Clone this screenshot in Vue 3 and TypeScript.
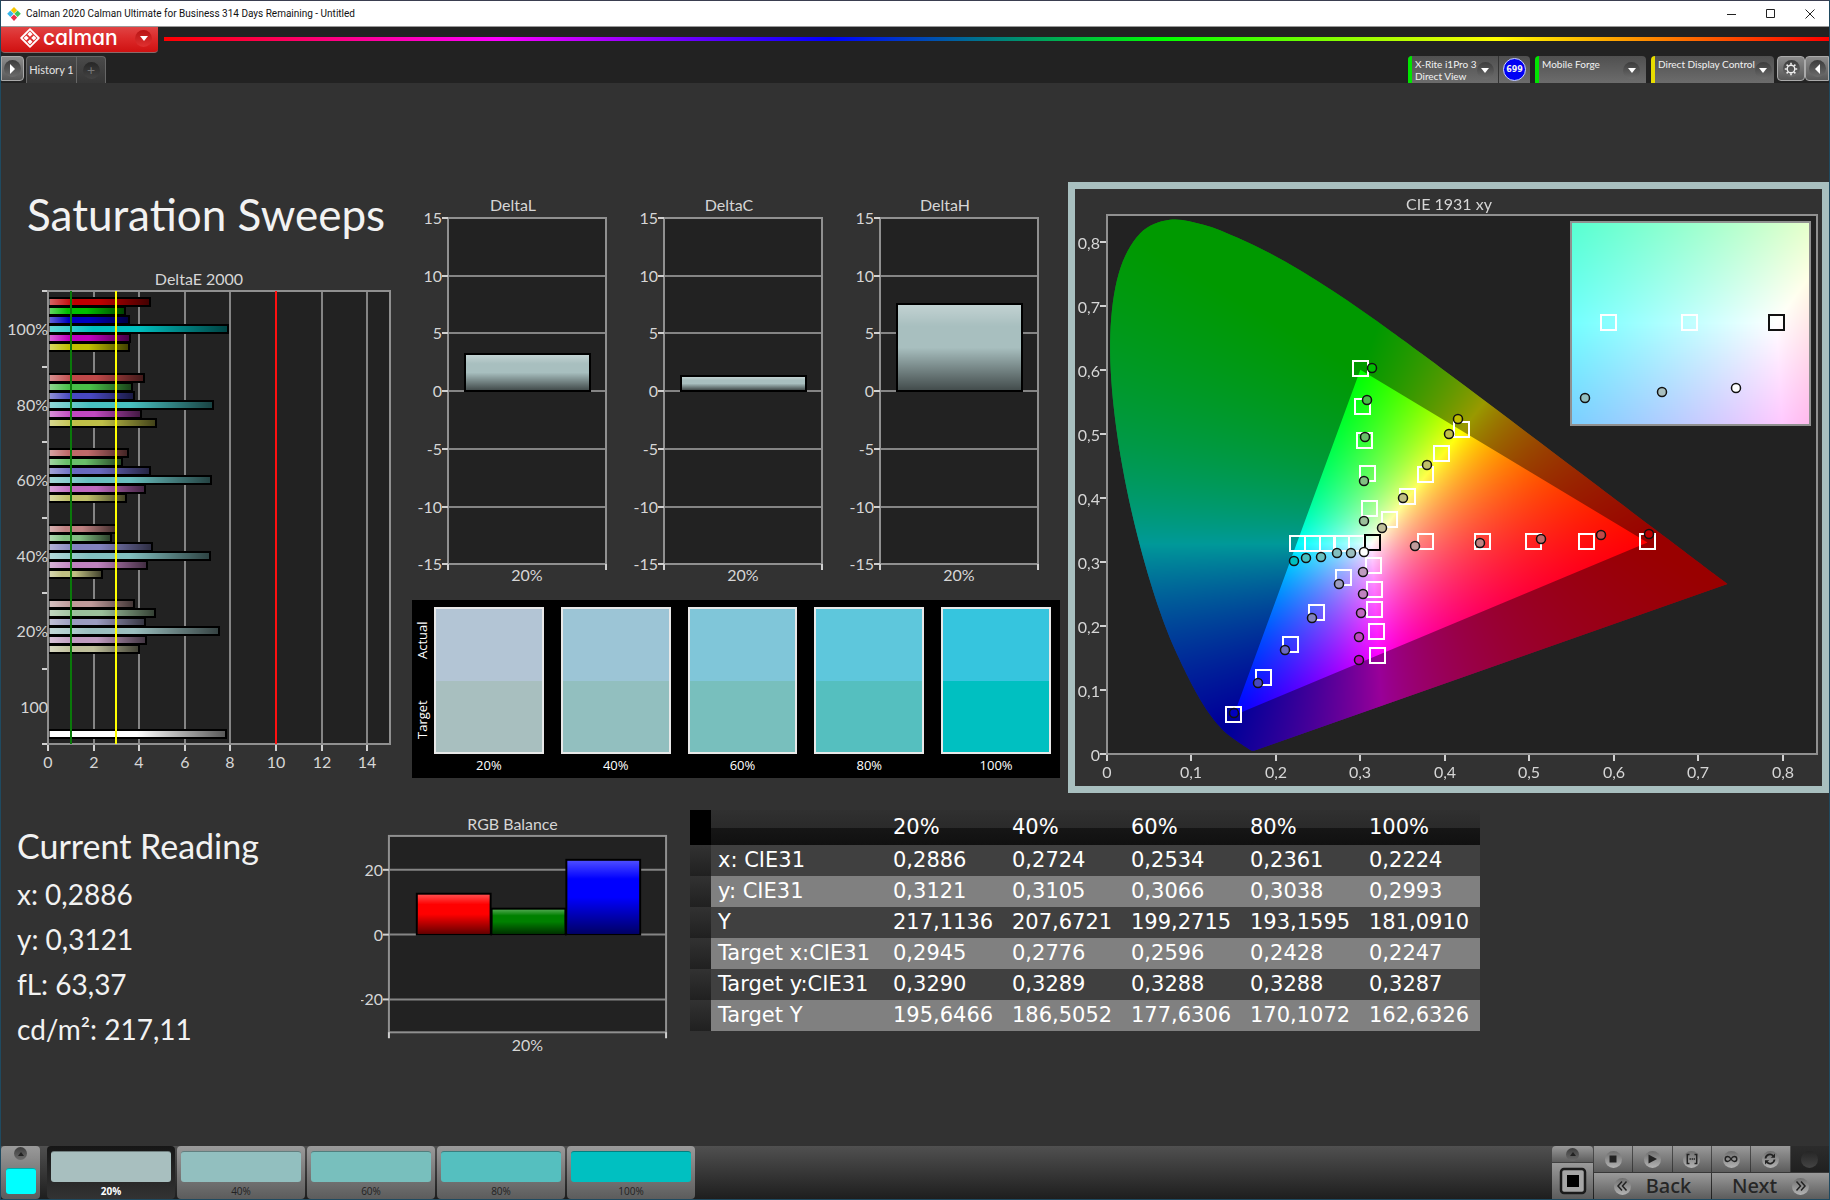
<script setup lang="ts">
import { onMounted, ref } from 'vue'

type Point = [number, number]

interface SweepGroup {
  label: string
  low: number
  values: number[]
}

interface VerticalChart {
  title: string
  value: number
}

/* ---------- Saturation sweep data ---------- */
const HIGH = 191
const hueMasks = ['r', 'g', 'b', 'gb', 'rb', 'rg']

function shade(mask: string, low: number): string {
  const c = (k: string) => (mask.includes(k) ? HIGH : low)
  return `rgb(${c('r')}, ${c('g')}, ${c('b')})`
}

const sweeps: SweepGroup[] = [
  { label: '100%', low: 0, values: [4.48, 3.36, 3.54, 7.88, 3.6, 3.54] },
  { label: '80%', low: 72, values: [4.22, 3.69, 3.78, 7.22, 4.06, 4.74] },
  { label: '60%', low: 105, values: [3.49, 3.25, 4.49, 7.16, 4.27, 3.43] },
  { label: '40%', low: 130, values: [2.99, 2.77, 4.55, 7.09, 4.33, 2.37] },
  { label: '20%', low: 155, values: [3.78, 4.68, 4.24, 7.49, 4.28, 4.0] },
]

const E = { left: 47, top: 29, right: 389, bottom: 482 }
const ex = (v: number) => Math.round(E.left + (v * (E.right - E.left)) / 15)
const ey = (band: number) => Math.round(E.top + (band * (E.bottom - E.top)) / 6)

/* ---------- Delta charts ---------- */
const deltaCharts: VerticalChart[] = [
  { title: 'DeltaL', value: 3.24 },
  { title: 'DeltaC', value: 1.32 },
  { title: 'DeltaH', value: 7.57 },
]
const deltaTicks = [15, 10, 5, 0, -5, -10, -15]
const dy = (v: number) => Math.round(200 - v * 11.55)

/* ---------- Swatches ---------- */
const swatches = [
  { label: '20%', actual: '#b3c5d5', target: '#a8bfbf' },
  { label: '40%', actual: '#9cc5d6', target: '#92bfbf' },
  { label: '60%', actual: '#80c6d9', target: '#78bfbd' },
  { label: '80%', actual: '#5ec7dc', target: '#55bfbf' },
  { label: '100%', actual: '#36c5de', target: '#00c0c1' },
]

/* ---------- RGB balance ---------- */
const by = (v: number) => Math.round(125 - v * 3.27)
const balance = [
  { color: '#ff0000', value: 12.4 },
  { color: '#008000', value: 7.8 },
  { color: '#0000ff', value: 23 },
]

/* ---------- Readings and table ---------- */
const readings = ['x: 0,2886', 'y: 0,3121', 'fL: 63,37', 'cd/m²: 217,11']
const rows = [
  { name: 'x: CIE31', cells: ['0,2886', '0,2724', '0,2534', '0,2361', '0,2224'] },
  { name: 'y: CIE31', cells: ['0,3121', '0,3105', '0,3066', '0,3038', '0,2993'] },
  { name: 'Y', cells: ['217,1136', '207,6721', '199,2715', '193,1595', '181,0910'] },
  { name: 'Target x:CIE31', cells: ['0,2945', '0,2776', '0,2596', '0,2428', '0,2247'] },
  { name: 'Target y:CIE31', cells: ['0,3290', '0,3289', '0,3288', '0,3288', '0,3287'] },
  { name: 'Target Y', cells: ['195,6466', '186,5052', '177,6306', '170,1072', '162,6326'] },
]

/* ---------- CIE 1931 chart ---------- */
const C = { w: 747, h: 597, left: 32, top: 26, right: 742, bottom: 565, sx: 844.5, sy: 640.6 }
const cx = (x: number) => Math.round(C.left + x * C.sx)
const cy = (y: number) => Math.round(C.bottom - y * C.sy)
const cieTicks = [0, 0.1, 0.2, 0.3, 0.4, 0.5, 0.6, 0.7, 0.8]
const comma = (v: number) => String(v).replace('.', ',')

const I = { left: 497, top: 34, right: 734, bottom: 235, x0: 0.27, x1: 0.3196, y0: 0.3041, y1: 0.3532 }
const ix = (x: number) => Math.round(I.left + ((x - I.x0) / (I.x1 - I.x0)) * (I.right - I.left))
const iy = (y: number) => Math.round(I.bottom - ((y - I.y0) / (I.y1 - I.y0)) * (I.bottom - I.top))

const targets: Point[] = [
  [0.3, 0.602], [0.3023, 0.5438], [0.3043, 0.4901], [0.3075, 0.4389], [0.3098, 0.3846],
  [0.4192, 0.5068], [0.3959, 0.4691], [0.3766, 0.437], [0.3552, 0.4031], [0.3343, 0.3673],
  [0.6394, 0.3318], [0.5676, 0.3318], [0.504, 0.3318], [0.4437, 0.3318], [0.3766, 0.3318],
  [0.225, 0.33], [0.2431, 0.33], [0.2601, 0.33], [0.2775, 0.33], [0.2945, 0.33],
  [0.1492, 0.0623], [0.1847, 0.1198], [0.2163, 0.1716], [0.2475, 0.2222], [0.2795, 0.2759],
  [0.3201, 0.1543], [0.3185, 0.192], [0.3166, 0.2265], [0.3166, 0.2574], [0.3146, 0.2951],
]

const measured: { mask: string; points: Point[] }[] = [
  { mask: 'g', points: [[0.3134, 0.602], [0.3079, 0.5525], [0.3059, 0.495], [0.3039, 0.4265], [0.3039, 0.3636]] },
  { mask: 'rg', points: [[0.4156, 0.5235], [0.405, 0.4988], [0.3785, 0.4512], [0.3505, 0.3994], [0.3252, 0.3531]] },
  { mask: 'r', points: [[0.6422, 0.3438], [0.585, 0.3414], [0.5139, 0.3358], [0.4421, 0.3296], [0.3643, 0.3247]] },
  { mask: 'gb', points: [[0.2218, 0.3006], [0.2356, 0.3062], [0.253, 0.308], [0.2724, 0.3136], [0.2885, 0.3136]] },
  { mask: 'b', points: [[0.1508, 0.0642], [0.1792, 0.1105], [0.2104, 0.1617], [0.2427, 0.2123], [0.2747, 0.266]] },
  { mask: 'rb', points: [[0.2988, 0.1475], [0.2988, 0.1833], [0.3008, 0.2198], [0.3031, 0.25], [0.3031, 0.2846]] },
]

const locus: Point[] = [
  [0.1741, 0.005], [0.1714, 0.0051], [0.1689, 0.0069], [0.1644, 0.0109], [0.1566, 0.0177], [0.144, 0.0297],
  [0.1355, 0.0399], [0.1241, 0.0578], [0.1096, 0.0868], [0.0913, 0.1327], [0.0687, 0.2007], [0.0454, 0.295],
  [0.0235, 0.4127], [0.0082, 0.5384], [0.0039, 0.6548], [0.0139, 0.7502], [0.0389, 0.812], [0.0743, 0.8338],
  [0.1142, 0.8262], [0.1547, 0.8059], [0.1929, 0.7816], [0.2296, 0.7543], [0.2658, 0.7243], [0.3016, 0.6923],
  [0.3373, 0.6589], [0.3731, 0.6245], [0.4441, 0.5547], [0.5125, 0.4866], [0.5752, 0.4242], [0.627, 0.3725],
  [0.6658, 0.334], [0.6915, 0.3083], [0.719, 0.2809], [0.7347, 0.2653],
]

const canvas = ref<HTMLCanvasElement | null>(null)

function chroma(x: number, y: number): [number, number, number] {
  const yy = Math.max(y, 0.0001)
  const X = x / yy
  const Z = (1 - x - yy) / yy
  const r = Math.max(0, 3.2406 * X - 1.5372 - 0.4986 * Z)
  const g = Math.max(0, -0.9689 * X + 1.8758 + 0.0415 * Z)
  const b = Math.max(0, 0.0557 * X - 0.204 + 1.057 * Z)
  const m = Math.max(r, g, b) || 1
  return [(r / m) * 255, (g / m) * 255, (b / m) * 255]
}

function field(w: number, h: number, toXY: (px: number, py: number) => Point): HTMLCanvasElement {
  const layer = document.createElement('canvas')
  layer.width = w
  layer.height = h
  const ctx = layer.getContext('2d')!
  const img = ctx.createImageData(w, h)
  for (let py = 0; py < h; py++) {
    for (let px = 0; px < w; px++) {
      const [x, y] = toXY(px, py)
      const [r, g, b] = chroma(x, y)
      const k = (py * w + px) * 4
      img.data[k] = r
      img.data[k + 1] = g
      img.data[k + 2] = b
      img.data[k + 3] = 255
    }
  }
  ctx.putImageData(img, 0, 0)
  return layer
}

function traceLocus(ctx: CanvasRenderingContext2D) {
  const p = locus.map(([x, y]): Point => [C.left + x * C.sx, C.bottom - y * C.sy])
  ctx.moveTo(p[0][0], p[0][1])
  for (let i = 0; i < p.length - 1; i++) {
    const a = p[Math.max(0, i - 1)]
    const b = p[i]
    const c = p[i + 1]
    const d = p[Math.min(p.length - 1, i + 2)]
    ctx.bezierCurveTo(
      b[0] + (c[0] - a[0]) / 6, b[1] + (c[1] - a[1]) / 6,
      c[0] - (d[0] - b[0]) / 6, c[1] - (d[1] - b[1]) / 6,
      c[0], c[1],
    )
  }
  ctx.closePath()
}

onMounted(() => {
  const ctx = canvas.value!.getContext('2d')!
  ctx.fillStyle = '#222222'
  ctx.fillRect(C.left, C.top, C.right - C.left, C.bottom - C.top)

  const gamut = field(C.w, C.h, (px, py) => [(px - C.left) / C.sx, (C.bottom - py) / C.sy])
  ctx.save()
  ctx.beginPath()
  traceLocus(ctx)
  ctx.clip()
  ctx.drawImage(gamut, 0, 0)
  ctx.fillStyle = 'rgba(0, 0, 0, 0.4)'
  ctx.beginPath()
  ctx.rect(0, 0, C.w, C.h)
  const tri: Point[] = [[0.64, 0.33], [0.3, 0.6], [0.15, 0.06]]
  tri.forEach(([x, y], i) => {
    const px = C.left + x * C.sx
    const py = C.bottom - y * C.sy
    if (i === 0) ctx.moveTo(px, py)
    else ctx.lineTo(px, py)
  })
  ctx.closePath()
  ctx.fill('evenodd')
  ctx.restore()

  const w = I.right - I.left
  const h = I.bottom - I.top
  const inset = field(w, h, (px, py) => [I.x0 + (px / w) * (I.x1 - I.x0), I.y1 - (py / h) * (I.y1 - I.y0)])
  ctx.drawImage(inset, I.left, I.top)
})
</script>

<template>
  <div class="app">
    <header class="titlebar">
      <svg class="appicon" viewBox="0 0 14 14" width="14" height="14" aria-hidden="true">
        <path d="M7 0l3.200 3.200L7 6.400 3.800 3.200z" fill="#f7c600" />
        <path d="M3.400 3.600l3.200 3.200L3.400 10 .2 6.800z" fill="#35b6ea" />
        <path d="M10.600 3.600l3.200 3.200-3.200 3.200-3.200-3.200z" fill="#3cc45a" />
        <path d="M7 7.400l3.200 3.200L7 14l-3.200-3.400z" fill="#e8304c" />
      </svg>
      <span class="caption">Calman 2020 Calman Ultimate for Business 314 Days Remaining - Untitled</span>
      <div class="winbtns">
        <button type="button" aria-label="Minimize"><svg viewBox="0 0 10 10" width="10" height="10"><path d="M0 5.500h9" /></svg></button>
        <button type="button" aria-label="Maximize"><svg viewBox="0 0 10 10" width="10" height="10"><path d="M.5.5h8v8h-8z" /></svg></button>
        <button type="button" aria-label="Close"><svg viewBox="0 0 10 10" width="10" height="10"><path d="M.5.5l9 9M9.500.5l-9 9" /></svg></button>
      </div>
    </header>

    <div class="brandrow">
      <button type="button" class="brand">
        <svg viewBox="0 0 20 20" width="20" height="20" aria-hidden="true">
          <path d="M10 1.200L18.800 10 10 18.800 1.200 10z" fill="none" stroke="#fff" stroke-width="1.800" stroke-linejoin="round" />
          <g fill="#fff">
            <path d="M10 3.600l2.600 2.600L10 8.800 7.400 6.200z" />
            <path d="M6.200 7.400L8.800 10l-2.600 2.600L3.600 10z" />
            <path d="M13.800 7.400l2.600 2.600-2.600 2.600-2.600-2.600z" />
            <path d="M10 11.200l2.600 2.600-2.600 2.600-2.600-2.600z" />
          </g>
        </svg>
        <span class="brandname">calman</span>
        <span class="disc red"><i class="tri down"></i></span>
      </button>
      <div class="rainbow"></div>
    </div>

    <div class="tabrow">
      <button type="button" class="metal edge" aria-label="Expand"><span class="disc"><i class="tri right"></i></span></button>
      <div class="tabs">
        <button type="button" class="tab">History 1</button>
        <button type="button" class="tab add" aria-label="Add"><span class="disc dim">+</span></button>
      </div>
      <div class="devices">
        <div class="device meter">
          <button type="button" class="devmain green"><span>X-Rite i1Pro 3<br />Direct View</span><span class="disc"><i class="tri down"></i></span></button>
          <button type="button" class="devbadge"><b>699</b></button>
        </div>
        <button type="button" class="device devmain green source"><span>Mobile Forge</span><span class="disc"><i class="tri down"></i></span></button>
        <button type="button" class="device devmain yellow display"><span>Direct Display Control</span><span class="disc"><i class="tri down"></i></span></button>
      </div>
      <button type="button" class="metal gear" aria-label="Settings">
        <span class="disc">
          <svg viewBox="0 0 14 14" width="14" height="14">
            <circle cx="7" cy="7" r="3.800" fill="none" stroke="#eee" stroke-width="1.400" />
            <path d="M7 .8v2M7 11.200v2M.8 7h2M11.200 7h2M2.600 2.600L4 4M10 10l1.400 1.400M2.600 11.400L4 10M10 4l1.400-1.400" stroke="#eee" stroke-width="1.600" />
          </svg>
        </span>
      </button>
      <button type="button" class="metal last" aria-label="Collapse"><span class="disc"><i class="tri left"></i></span></button>
    </div>

    <main>
      <section class="upper">
        <div class="colA">
          <h1>Saturation Sweeps</h1>
          <svg class="chart" viewBox="0 0 404 520" role="img" aria-label="DeltaE 2000">
            <defs>
              <linearGradient id="glossH">
                <stop offset="0" stop-color="#fff" stop-opacity=".4" />
                <stop offset=".25" stop-color="#fff" stop-opacity="0" />
                <stop offset=".5" stop-color="#000" stop-opacity="0" />
                <stop offset="1" stop-color="#000" stop-opacity=".65" />
              </linearGradient>
              <linearGradient id="glossV" x2="0" y2="1">
                <stop offset="0" stop-color="#fff" stop-opacity=".3" />
                <stop offset=".25" stop-color="#fff" stop-opacity="0" />
                <stop offset=".5" stop-color="#000" stop-opacity="0" />
                <stop offset="1" stop-color="#000" stop-opacity=".6" />
              </linearGradient>
            </defs>
            <text x="198" y="23" text-anchor="middle">DeltaE 2000</text>
            <rect :x="E.left" :y="E.top" :width="E.right - E.left" :height="E.bottom - E.top" fill="#222" />
            <g class="grid">
              <path v-for="t in [2, 4, 6, 8, 12, 14]" :key="t" :d="`M${ex(t)} ${E.top}V${E.bottom}`" />
            </g>
            <g v-for="(s, gi) in sweeps" :key="s.label">
              <template v-for="(v, i) in s.values" :key="i">
                <rect class="bar" :x="E.left + 1" :y="ey(gi) + 7 + i * 9" :width="ex(v) - E.left - 1" height="8" :fill="shade(hueMasks[i], s.low)" />
                <rect :x="E.left + 1" :y="ey(gi) + 8 + i * 9" :width="ex(v) - E.left - 2" height="6" fill="url(#glossH)" />
              </template>
            </g>
            <rect class="bar" :x="E.left + 1" y="468" :width="ex(7.8) - E.left - 1" height="8" fill="#fff" />
            <rect :x="E.left + 1" y="469" :width="ex(7.8) - E.left - 2" height="6" fill="url(#glossH)" />
            <rect class="frame" :x="E.left" :y="E.top" :width="E.right - E.left" :height="E.bottom - E.top" />
            <path :d="`M${ex(1)} ${E.top}V${E.bottom}`" stroke="#0a7a0a" stroke-width="2" />
            <path :d="`M${ex(3)} ${E.top}V${E.bottom}`" stroke="#ffff00" stroke-width="2" />
            <path :d="`M${ex(10)} ${E.top}V${E.bottom}`" stroke="#ff1010" stroke-width="2" />
            <g class="tick">
              <path v-for="n in 7" :key="n" :d="`M${E.left - 6} ${ey(n - 1)}h5`" />
              <path v-for="t in [0, 2, 4, 6, 8, 10, 12, 14]" :key="'x' + t" :d="`M${ex(t)} ${E.bottom + 1}v6`" />
            </g>
            <text v-for="(l, n) in ['100%', '80%', '60%', '40%', '20%', '100']" :key="n" :x="E.left" :y="ey(n) + 44" text-anchor="end">{{ l }}</text>
            <text v-for="t in [0, 2, 4, 6, 8, 10, 12, 14]" :key="'l' + t" :x="ex(t)" y="506" text-anchor="middle">{{ t }}</text>
          </svg>
        </div>

        <div class="colB">
          <div class="deltas">
            <svg v-for="d in deltaCharts" :key="d.title" class="chart" viewBox="0 0 216 409" role="img" :aria-label="d.title">
              <text x="108" y="20" text-anchor="middle">{{ d.title }}</text>
              <rect x="43" :y="dy(15)" width="158" :height="dy(-15) - dy(15)" fill="#222" />
              <g class="grid"><path v-for="t in deltaTicks" :key="t" :d="`M43 ${dy(t)}h158`" /></g>
              <rect class="frame" x="43" :y="dy(15)" width="158" :height="dy(-15) - dy(15)" />
              <rect class="bar" x="60" :y="dy(d.value)" width="125" :height="dy(0) - dy(d.value)" fill="#a8bfbf" />
              <rect x="61" :y="dy(d.value) + 1" width="123" :height="dy(0) - dy(d.value) - 2" fill="url(#glossV)" />
              <g class="tick">
                <path v-for="t in deltaTicks" :key="t" :d="`M37 ${dy(t)}h6`" />
                <path :d="`M43 ${dy(-15)}v6M201 ${dy(-15)}v6`" />
              </g>
              <text v-for="t in deltaTicks" :key="'l' + t" x="37" :y="dy(t) + 6" text-anchor="end">{{ t }}</text>
              <text x="122" y="390" text-anchor="middle">20%</text>
            </svg>
          </div>
          <div class="compare">
            <div class="side"><span>Actual</span><span>Target</span></div>
            <figure v-for="s in swatches" :key="s.label">
              <div class="pair"><i :style="{ background: s.actual }"></i><i :style="{ background: s.target }"></i></div>
              <figcaption>{{ s.label }}</figcaption>
            </figure>
          </div>
        </div>

        <div class="cie">
          <canvas ref="canvas" :width="C.w" :height="C.h"></canvas>
          <svg class="chart" :viewBox="`0 0 ${C.w} ${C.h}`" role="img" aria-label="CIE 1931 xy">
            <text x="374" y="21" text-anchor="middle">CIE 1931 xy</text>
            <rect class="frame" :x="C.left" :y="C.top" :width="C.right - C.left" :height="C.bottom - C.top" />
            <g class="tick">
              <path v-for="t in cieTicks" :key="'y' + t" :d="`M${C.left - 7} ${cy(t)}h6`" />
              <path v-for="t in cieTicks" :key="'x' + t" :d="`M${cx(t)} ${C.bottom + 1}v6`" />
            </g>
            <text v-for="t in cieTicks" :key="'ly' + t" x="25" :y="cy(t) + 7" text-anchor="end">{{ comma(t) }}</text>
            <text v-for="t in cieTicks" :key="'lx' + t" :x="cx(t)" y="589" text-anchor="middle">{{ comma(t) }}</text>
            <g fill="none" stroke="#fff" stroke-width="2">
              <rect v-for="(t, i) in targets" :key="i" :x="cx(t[0]) - 7" :y="cy(t[1]) - 7" width="15" height="15" />
            </g>
            <rect :x="cx(0.3134) - 7" :y="cy(0.3302) - 7" width="15" height="15" fill="none" stroke="#000" stroke-width="2" />
            <g stroke="#111" stroke-width="1.500">
              <template v-for="m in measured" :key="m.mask">
                <circle v-for="(p, i) in m.points" :key="i" :cx="cx(p[0])" :cy="cy(p[1])" r="4.500" :fill="shade(m.mask, sweeps[i].low)" />
              </template>
              <circle :cx="cx(0.3039)" :cy="cy(0.316)" r="4.500" fill="#fff" />
            </g>
            <rect class="frame" :x="I.left - 1" :y="I.top - 1" :width="I.right - I.left + 2" :height="I.bottom - I.top + 2" />
            <g fill="none" stroke="#fff" stroke-width="2">
              <rect v-for="x in [0.2776, 0.2945]" :key="x" :x="ix(x) - 7" :y="iy(0.329) - 7" width="15" height="15" />
            </g>
            <rect :x="ix(0.3127) - 7" :y="iy(0.329) - 7" width="15" height="15" fill="none" stroke="#111" stroke-width="2" />
            <g stroke="#111" stroke-width="1.500">
              <circle :cx="ix(0.2728)" :cy="iy(0.3104)" r="4.500" fill="#92bfbf" />
              <circle :cx="ix(0.2889)" :cy="iy(0.3118)" r="4.500" fill="#a8bfbf" />
              <circle :cx="ix(0.3044)" :cy="iy(0.313)" r="4.500" fill="#fff" />
            </g>
          </svg>
        </div>
      </section>

      <section class="lower">
        <div class="reading">
          <h2>Current Reading</h2>
          <p v-for="r in readings" :key="r">{{ r }}</p>
        </div>
        <svg class="chart" viewBox="0 0 330 250" role="img" aria-label="RGB Balance">
          <text x="152" y="20" text-anchor="middle">RGB Balance</text>
          <rect x="28" y="26" width="278" height="197" fill="#222" />
          <g class="grid"><path v-for="t in [20, 0, -20]" :key="t" :d="`M28 ${by(t)}h278`" /></g>
          <rect class="frame" x="28" y="26" width="278" height="197" />
          <template v-for="(b, i) in balance" :key="i">
            <rect class="bar" :x="56 + i * 75" :y="by(b.value)" width="74" :height="by(0) - by(b.value)" :fill="b.color" />
            <rect :x="57 + i * 75" :y="by(b.value) + 1" width="72" :height="by(0) - by(b.value) - 2" fill="url(#glossV)" />
          </template>
          <g class="tick">
            <path v-for="t in [20, 0, -20]" :key="t" :d="`M22 ${by(t)}h6`" />
            <path d="M28 223v6M306 223v6" />
          </g>
          <text v-for="t in [20, 0, -20]" :key="'l' + t" x="22" :y="by(t) + 6" text-anchor="end">{{ t }}</text>
          <text x="167" y="242" text-anchor="middle">20%</text>
        </svg>
        <table>
          <thead>
            <tr>
              <td class="stub"></td>
              <th></th>
              <th v-for="s in swatches" :key="s.label" scope="col">{{ s.label }}</th>
            </tr>
          </thead>
          <tbody>
            <tr v-for="r in rows" :key="r.name">
              <td class="stub"></td>
              <th scope="row">{{ r.name }}</th>
              <td v-for="(c, i) in r.cells" :key="i">{{ c }}</td>
            </tr>
          </tbody>
        </table>
      </section>
    </main>

    <footer>
      <button type="button" class="patch" aria-label="Current colour"><span class="disc small"><i class="tri up"></i></span><i class="cyan"></i></button>
      <div class="strip">
        <button v-for="(s, i) in swatches" :key="s.label" type="button" :class="{ active: i === 0 }">
          <i :style="{ background: s.target }"></i>{{ s.label }}
        </button>
      </div>
      <div class="controls">
        <div class="window">
          <button type="button" aria-label="More"><span class="disc small"><i class="tri up"></i></span></button>
          <button type="button" aria-label="Pattern window">
            <svg viewBox="0 0 28 28" width="28" height="28"><rect x="2" y="2" width="24" height="24" rx="3" fill="#a5a5a5" stroke="#1a1a1a" stroke-width="2.500" /><rect x="8" y="8" width="12" height="12" fill="#000" /></svg>
          </button>
        </div>
        <div class="transport">
          <div class="icons">
            <button type="button" aria-label="Stop"><span class="disc light"><svg viewBox="0 0 14 14" width="14" height="14"><path d="M3.500 3.500h7v7h-7z" fill="#222" /></svg></span></button>
            <button type="button" aria-label="Play"><span class="disc light"><svg viewBox="0 0 14 14" width="14" height="14"><path d="M3.500 2.500l8.500 4.500-8.500 4.500z" fill="#222" /></svg></span></button>
            <button type="button" aria-label="Range"><span class="disc light"><svg viewBox="0 0 14 14" width="14" height="14"><path d="M4.500 2.500H2.300v9h2.200M9.500 2.500h2.200v9H9.500" fill="none" stroke="#222" stroke-width="1.500" /><path d="M4.500 6.300h1.400v1.400H4.500zM6.600 6.300H8v1.400H6.600zM8.600 6.300H10v1.400H8.600z" fill="#222" /></svg></span></button>
            <button type="button" aria-label="Loop"><span class="disc light"><svg viewBox="0 0 14 14" width="14" height="14"><path d="M7 7C5.800 5 4.800 4.500 3.700 4.500a2.500 2.500 0 0 0 0 5C4.800 9.500 5.800 9 7 7s2.200-2.500 3.300-2.500a2.500 2.500 0 0 1 0 5C9.200 9.500 8.200 9 7 7z" fill="none" stroke="#222" stroke-width="1.400" /></svg></span></button>
            <button type="button" aria-label="Refresh"><span class="disc light"><svg viewBox="0 0 14 14" width="14" height="14"><path d="M2.500 6.500A4.500 4.500 0 0 1 10.200 3.800M11.500 7.500a4.500 4.500 0 0 1-7.700 2.700" fill="none" stroke="#222" stroke-width="1.800" /><path d="M12 1.500v4.200H7.800zM2 12.500V8.300h4.200z" fill="#222" /></svg></span></button>
            <button type="button" class="off" aria-label="Record"><span class="disc dim"></span></button>
          </div>
          <div class="nav">
            <button type="button"><span class="disc light"><svg viewBox="0 0 14 14" width="14" height="14"><path d="M7 2.500L3 7l4 4.500M11.500 2.500L7.500 7l4 4.500" fill="none" stroke="#222" stroke-width="1.500" /></svg></span>Back</button>
            <button type="button">Next<span class="disc light"><svg viewBox="0 0 14 14" width="14" height="14"><path d="M7 2.500L11 7l-4 4.500M2.500 2.500L6.500 7l-4 4.500" fill="none" stroke="#222" stroke-width="1.500" /></svg></span></button>
          </div>
        </div>
      </div>
    </footer>
  </div>
</template>

<style>
body {
  margin: 0;
  background: #323232;
}
</style>

<style scoped>
.app {
  box-sizing: border-box;
  min-height: 100vh;
  display: flex;
  flex-direction: column;
  border: solid #1f4a60;
  border-width: 0 1px 1px;
  background: #323232;
  color: #f2f2f2;
  font-family: Lato, "Open Sans", sans-serif;
}
.app *,
.app *::before {
  box-sizing: border-box;
}
button {
  margin: 0;
  padding: 0;
  border: 0;
  background: none;
  color: inherit;
  font: inherit;
}
i {
  display: block;
}

/* title bar */
.titlebar {
  height: 27px;
  display: flex;
  align-items: center;
  border-top: 1px solid #3a3e50;
  border-bottom: 1px solid #9a9a9a;
  background: #fff;
  color: #111;
}
.appicon {
  margin-left: 6px;
}
.caption {
  flex: 1;
  margin-left: 5px;
  font: 10px/16px Roboto, sans-serif;
}
.winbtns {
  display: flex;
}
.winbtns button {
  width: 39px;
  height: 25px;
  display: grid;
  place-items: center;
}
.winbtns svg {
  fill: none;
  stroke: #222;
}

/* brand row */
.brandrow {
  height: 26px;
  display: flex;
  align-items: center;
  background: #222;
}
.brand {
  width: 157px;
  height: 26px;
  padding: 0 0 3px 19px;
  display: flex;
  align-items: center;
  border-radius: 0 0 4px 4px;
  border-bottom: 1px solid #8a6a6a;
  background: linear-gradient(#e04444, #dc2a2a 45%, #cf1111);
  color: #fff;
}
.brandname {
  width: 92px;
  margin-left: 3px;
  text-align: left;
  font: 500 21px/22px Inter, sans-serif;
  font-feature-settings: "cv11";
}
.rainbow {
  flex: 1;
  height: 4px;
  margin: 0 0 2px 6px;
  background: linear-gradient(90deg, #f00, #f0f 20%, #00f 40%, #0f0 60%, #ff0 80%, #f00);
}

/* round indents and arrows */
.disc {
  flex: none;
  width: 17px;
  height: 17px;
  display: grid;
  place-items: center;
  border-radius: 50%;
  background: linear-gradient(#3c3c3c, #6c6c6c);
}
.disc.red {
  background: linear-gradient(#b81414, #e03030);
}
.disc.dim {
  background: linear-gradient(#262626, #444);
  color: #777;
}
.disc.light {
  background: linear-gradient(#6e6e6e, #b4b4b4);
}
.disc.small {
  width: 13px;
  height: 13px;
}
.tri {
  width: 0;
  height: 0;
  border: 5px solid transparent;
}
.tri.down {
  border-width: 5px 4px 0;
  border-top-color: #fff;
}
.tri.up {
  border-width: 0 3px 4px;
  border-bottom-color: #222;
}
.tri.right {
  border-left-color: #fff;
  border-right-width: 0;
}
.tri.left {
  border-right-color: #fff;
  border-left-width: 0;
}

/* tab row */
.tabrow {
  height: 30px;
  padding-top: 3px;
  display: flex;
  align-items: stretch;
  background: #222;
  font-size: 10px;
  line-height: 12px;
}
.metal {
  width: 28px;
  height: 25px;
  display: grid;
  place-items: center;
  border: 1px solid #aaa;
  border-radius: 4px;
  background: linear-gradient(#8c8c8c, #585858);
}
.metal.edge {
  width: 23px;
  border-radius: 0 4px 4px 0;
}
.metal.last {
  width: 24px;
  border-radius: 4px 0 0 4px;
}
.tabs {
  display: flex;
  margin: 0 auto 0 2px;
  border: 1px solid #666;
  border-bottom: 0;
  border-radius: 4px 4px 0 0;
  background: linear-gradient(#4a4a4a, #363636);
}
.tab {
  width: 49px;
  color: #e4e4e4;
  font-size: 11px;
}
.tab.add {
  width: 29px;
  display: grid;
  place-items: center;
  border-left: 1px solid #666;
  font-size: 14px;
}
.devices {
  display: flex;
  gap: 5px;
  margin-right: 3px;
}
.device {
  border-radius: 4px 4px 0 0;
  background: linear-gradient(#505050, #6c6c6c);
  overflow: hidden;
}
.meter {
  width: 122px;
  display: flex;
}
.devmain {
  flex: none;
  width: 91px;
  padding: 2px 6px 0 3px;
  display: flex;
  justify-content: space-between;
  text-align: left;
  border-left: 4px solid #00e400;
  white-space: nowrap;
}
.meter .devmain {
  width: 90px;
  padding-right: 6px;
}
.devmain .disc {
  margin-top: 4px;
}
.devmain.yellow {
  border-left-color: #e8dc00;
}
.device.source {
  width: 111px;
}
.device.display {
  width: 123px;
  padding-right: 5px;
}
.devbadge {
  flex: 1;
  display: grid;
  place-items: center;
  border-left: 1px solid #333;
}
.devbadge b {
  width: 23px;
  height: 23px;
  border: 1px solid #cdd6ff;
  border-radius: 50%;
  background: #0000f4;
  font: 700 8px/21px "DejaVu Sans", sans-serif;
  text-align: center;
}

/* workspace */
main {
  flex: 1;
}
.chart {
  display: block;
  width: 100%;
  height: auto;
  fill: #d6d6d6;
  font-size: 16px;
}
.grid path {
  stroke: #858585;
  stroke-width: 2;
}
.frame {
  fill: none;
  stroke: #909090;
  stroke-width: 2;
}
.tick path {
  stroke: #d0d0d0;
  stroke-width: 2;
}
.bar {
  stroke: #000;
  stroke-width: 2;
}
.upper {
  display: grid;
  grid-template-columns: 404fr 663fr 761fr;
  align-items: start;
  padding-top: 99px;
}
h1 {
  margin: 4px 0 20px 26px;
  font-size: 44px;
  line-height: 56px;
  font-weight: 400;
}
.deltas {
  display: grid;
  grid-template-columns: repeat(3, 1fr);
  margin-top: 9px;
  padding-right: 15px;
}
.compare {
  display: flex;
  gap: 17px;
  height: 178px;
  margin: 0 8px 0 7px;
  padding: 7px 9px 0 3px;
  background: #000;
  color: #fff;
  font: 13px/22px "Open Sans", sans-serif;
}
.side {
  width: 14px;
  margin-right: -12px;
  display: grid;
  grid-template-rows: 66px 94px;
  justify-items: center;
  line-height: 14px;
}
.side span {
  writing-mode: vertical-rl;
  transform: rotate(180deg);
  text-align: center;
}
.compare figure {
  flex: 1;
  margin: 0;
  text-align: center;
}
.pair {
  height: 147px;
  display: grid;
  grid-template-rows: 1fr 1fr;
  border: 2px solid #e8e8e8;
}
.cie {
  display: grid;
  border: 7px solid #a8bfbf;
}
.cie canvas,
.cie svg {
  grid-area: 1 / 1;
  width: 100%;
}

.lower {
  display: grid;
  grid-template-columns: 360fr 329fr 790fr 349fr;
  align-items: start;
  padding-top: 17px;
}
.reading {
  padding-left: 16px;
}
.reading h2 {
  margin: 16px 0 6px;
  font-size: 34px;
  line-height: 40px;
  font-weight: 400;
}
.reading p {
  margin: 0;
  font-size: 28px;
  line-height: 45px;
}
table {
  width: 100%;
  table-layout: fixed;
  border-collapse: collapse;
  color: #fff;
  font: 21px/31px "DejaVu Sans", sans-serif;
}
th,
td {
  padding: 0 0 0 8px;
  font-weight: 400;
  text-align: left;
  white-space: nowrap;
}
th:nth-child(2) {
  width: 174px;
  padding-left: 7px;
}
td.stub {
  width: 21px;
  padding: 0;
  background: linear-gradient(#323232, #202020);
}
thead tr {
  height: 35px;
  background: linear-gradient(#303030, #2a2a2a 50%, #161616 50%, #101010);
}
thead td.stub {
  background: #000;
}
tbody tr {
  height: 31px;
  background: #404040;
}
tbody tr:nth-child(even) {
  background: #808080;
}

/* bottom bar */
footer {
  height: 53px;
  display: flex;
  background: linear-gradient(#505050, #1e1e1e);
}
footer button {
  background: linear-gradient(#9a9a9a, #5c5c5c);
}
.patch {
  width: 39px;
  padding: 1px 4px 5px;
  display: flex;
  flex-direction: column;
  align-items: center;
  justify-content: space-between;
  border-radius: 4px;
}
.patch .cyan {
  width: 30px;
  height: 26px;
  border-radius: 3px;
  border-top: 1px solid #0aa;
  background: #00ffff;
}
.strip {
  display: flex;
  gap: 2px;
  margin-left: 7px;
}
.strip button {
  width: 128px;
  padding: 5px 4px 1px;
  border-radius: 4px;
  color: #222;
  font: 10px/14px "Open Sans", sans-serif;
}
.strip button i {
  height: 31px;
  margin-bottom: 2px;
  border-radius: 3px;
  border-top: 1px solid #0005;
}
.strip button.active {
  background: linear-gradient(#161616, #333);
  color: #fff;
  font-weight: 700;
}
.controls {
  display: flex;
  gap: 1px;
  margin-left: auto;
}
.window {
  width: 41px;
  display: grid;
  grid-template-rows: 16px 36px;
  gap: 1px;
}
.window button,
.icons button {
  display: grid;
  place-items: center;
}
.window button:first-child {
  border-radius: 4px 4px 0 0;
}
.transport {
  width: 235px;
  display: grid;
  grid-template-rows: 26px 26px;
  gap: 1px;
}
.icons,
.nav {
  display: grid;
  grid-template-columns: repeat(6, 1fr);
  column-gap: 1px;
}
.nav {
  grid-template-columns: 1fr 1fr;
}
.icons .off {
  background: linear-gradient(#2c2c2c, #202020);
}
.nav button {
  display: flex;
  align-items: center;
  justify-content: center;
  gap: 15px;
  color: #262626;
  font: 500 20px/26px "Noto Sans", sans-serif;
}
</style>
